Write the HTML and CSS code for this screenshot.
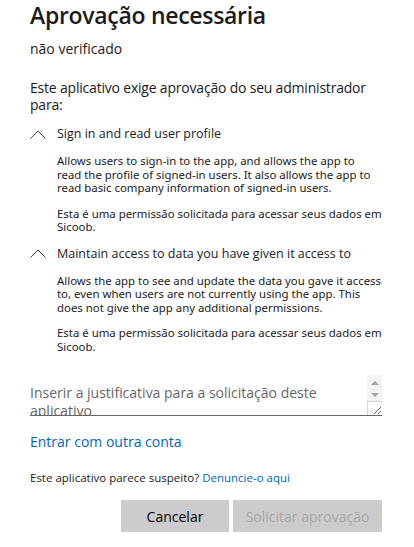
FILE: index.html
```html
<html lang="pt">
  <head>
    <meta charset="UTF-8" />
    <meta name="viewport" content="width=device-width, initial-scale=1.0" />
    <title>Aprovação necessária</title>
    <link rel="stylesheet" href="styles.css">
  </head>

  <body>
    <div class="consent">
      <h1 class="title">Aprovação necessária</h1>
      <div class="subtitle">não verificado</div>
      <p class="intro">Este aplicativo exige aprovação do seu administrador para:</p>

      <ul class="perms">
        <li class="perm">
          <div class="perm-head">
            <svg class="chevron" width="16" height="9" viewBox="0 0 16 9">
              <polyline points="0.5,8.5 8,1 15.5,8.5" fill="none" stroke="#444" stroke-width="1" />
            </svg>
            <span>Sign in and read user profile</span>
          </div>
          <div class="perm-body">
            <p>Allows users to sign-in to the app, and allows the app to read the profile of signed-in users. It also allows the app to read basic company information of signed-in users.</p>
            <p>Esta é uma permissão solicitada para acessar seus dados em Sicoob.</p>
          </div>
        </li>
        <li class="perm">
          <div class="perm-head">
            <svg class="chevron" width="16" height="9" viewBox="0 0 16 9">
              <polyline points="0.5,8.5 8,1 15.5,8.5" fill="none" stroke="#444" stroke-width="1" />
            </svg>
            <span>Maintain access to data you have given it access to</span>
          </div>
          <div class="perm-body">
            <p>Allows the app to see and update the data you gave it access to, even when users are not currently using the app. This does not give the app any additional permissions.</p>
            <p>Esta é uma permissão solicitada para acessar seus dados em Sicoob.</p>
          </div>
        </li>
      </ul>

      <div class="justify">
        <textarea placeholder="Inserir a justificativa para a solicitação deste aplicativo"></textarea>
        <span class="arrows">
          <span class="arrow up"></span>
          <span class="arrow down"></span>
        </span>
        <span class="grip"></span>
      </div>

      <a class="other" href="#">Entrar com outra conta</a>

      <div class="report">Este aplicativo parece suspeito? <a href="#">Denuncie-o aqui</a></div>

      <div class="actions">
        <button class="btn">Cancelar</button>
        <button class="btn" disabled>Solicitar aprovação</button>
      </div>
    </div>
  </body>
</html>
```

FILE: styles.css
```css
body {
  margin: 0;
  background-color: #fff;
  color: #1b1b1b;
  font-family: "Open Sans", "Noto Sans", sans-serif;
}

.consent {
  width: 352px;
  padding: 0 0 0 30px;
}

.title {
  margin: 0;
  padding-top: 1px;
  font-size: 23px;
  font-weight: 600;
  line-height: 28px;
  letter-spacing: -0.3px;
}

.subtitle {
  margin-top: 10px;
  font-size: 14px;
  line-height: 20px;
}

.intro {
  margin: 20px 0 0;
  font-size: 14px;
  line-height: 17px;
  letter-spacing: -0.2px;
}

.perms {
  list-style-type: none;
  margin: 11px 0 0;
  padding: 0;
}

.perm-head {
  display: flex;
  align-items: center;
  font-size: 12.5px;
  line-height: 20px;
}

.chevron {
  width: 16px;
  margin-right: 11px;
}

.perm-body {
  padding-left: 27px;
  font-family: "Noto Sans", sans-serif;
  font-size: 11.4px;
  line-height: 13.5px;
}

.perm-body p {
  margin: 12px 0 0;
}

.perm-body p:first-child {
  margin-top: 10px;
}

.perm + .perm {
  margin-top: 10px;
}

.justify {
  position: relative;
  margin-top: 22px;
}

.justify textarea {
  display: block;
  width: 100%;
  height: 41px;
  box-sizing: border-box;
  margin: 0;
  padding: 9px 20px 0 0;
  border: none;
  border-bottom: 1px solid #666;
  font-family: inherit;
  font-size: 14px;
  line-height: 18px;
  color: #1b1b1b;
  outline: none;
}

.justify textarea::placeholder {
  color: #666;
}

.arrows {
  position: absolute;
  right: 0;
  top: 0;
  width: 15px;
  height: 27px;
  background-color: #f3f3f3;
}

.arrow {
  position: absolute;
  left: 4px;
  width: 0;
  height: 0;
  border-left: 4px solid transparent;
  border-right: 4px solid transparent;
}

.arrow.up {
  top: 6px;
  border-bottom: 4px solid #a3a3a3;
}

.arrow.down {
  top: 18px;
  border-top: 4px solid #a3a3a3;
}

.grip {
  position: absolute;
  right: 0;
  bottom: 1px;
  width: 14px;
  height: 13px;
  border-left: 1px solid #d4d4d4;
  border-top: 1px solid #d4d4d4;
  pointer-events: none;
}

.other {
  display: block;
  margin-top: 16px;
  font-size: 14px;
  line-height: 20px;
  color: #0067b8;
  text-decoration: none;
}

.report {
  margin-top: 18px;
  font-size: 11.5px;
  line-height: 16px;
}

.report a {
  color: #0067b8;
  text-decoration: none;
}

.actions {
  display: flex;
  justify-content: flex-end;
  gap: 4px;
  margin-top: 14px;
}

.btn {
  height: 32px;
  padding: 0 12px;
  min-width: 108px;
  border: none;
  background-color: #ccc;
  color: #000;
  font-family: inherit;
  font-size: 14px;
}

.btn:disabled {
  color: #a8a8a8;
  min-width: 149px;
}
```
